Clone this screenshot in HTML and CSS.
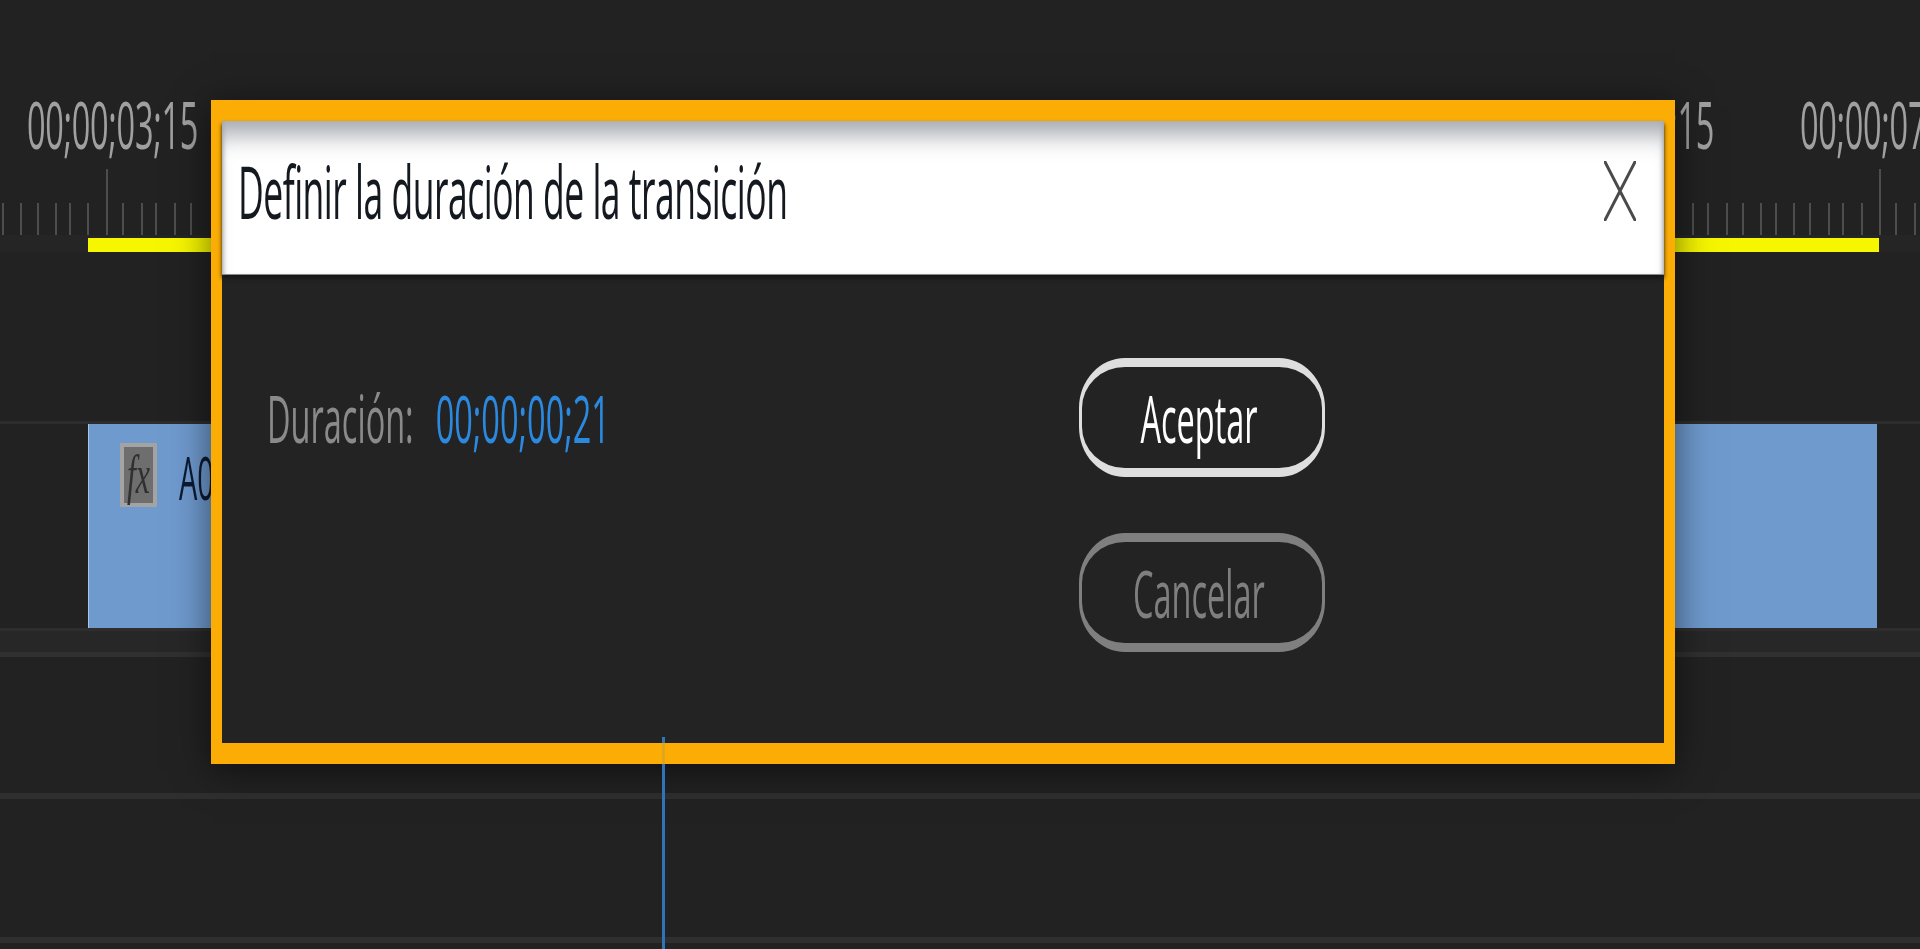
FILE: index.html
```html
<!DOCTYPE html>
<html lang="en">
<head>
    <meta charset="UTF-8">
    <meta name="viewport" content="width=device-width, initial-scale=1.0">
    <title>Definir la duración de la transición</title>
    <link rel="stylesheet" href="styles.css">
</head>
<body>
    <div id="timeline">
        <div class="labels">
            <span class="timecode first"><span class="tall">00;00;03;15</span></span>
            <span class="timecode second"><span class="tall">00;00;05;15</span></span>
            <span class="timecode third"><span class="tall">00;00;07;15</span></span>
        </div>
        <svg class="ticks" width="1920" height="66" viewBox="0 0 1920 66">
            <path d="M3 34V66M21 34V66M38 34V66M56 34V66M70 34V66M88 34V66M107 0V66M123 34V66M142 34V66M156 34V66M175 34V66M191 34V66M1693 34V66M1708 34V66M1727 34V66M1743 34V66M1761 34V66M1776 34V66M1794 34V66M1810 34V66M1829 34V66M1843 34V66M1862 34V66M1880 0V66M1896 34V66M1915 34V66"/>
        </svg>
        <div class="workarea"><div class="workbar"></div></div>
        <div class="track">
            <div class="clip">
                <span class="fx"><span class="fx-text">fx</span></span>
                <span class="clipname"><span class="tall">A01</span></span>
            </div>
        </div>
        <div class="band"></div>
        <div class="rule rule-b"></div>
        <div class="rule rule-c"></div>
    </div>

    <div id="dialog">
        <div class="head">
            <span class="title"><span class="tall">Definir la duración de la transición</span></span>
            <svg class="close" width="32" height="60" viewBox="0 0 32 60">
                <path d="M1 1L31 59M31 1L1 59"/>
            </svg>
        </div>
        <div class="body">
            <div class="duration">
                <span class="durlabel"><span class="tall">Duración:</span></span>
                <span class="durvalue"><span class="tall">00;00;00;21</span></span>
            </div>
            <div class="buttons">
                <div class="btn ok"><span class="tall">Aceptar</span></div>
                <div class="btn cancel"><span class="tall">Cancelar</span></div>
            </div>
        </div>
    </div>

    <div id="playhead"></div>
</body>
</html>
```

FILE: styles.css
```css
html{
    font-family: "Open Sans", sans-serif;
}

body{
    margin: 0;
    width: 1920px;
    height: 949px;
    overflow: hidden;
    position: relative;
    background-color: #222222;
    filter: blur(0.6px);
}

.tall{
    display: inline-block;
    white-space: nowrap;
    transform: scaleY(2.05);
}

.labels{
    display: flex;
    height: 169px;
    padding-top: 100px;
    box-sizing: border-box;
}

.timecode{
    flex: none;
    width: 170px;
    height: 47px;
    line-height: 47px;
    font-size: 32.5px;
    color: #a0a0a0;
    letter-spacing: -0.3px;
}

.timecode .tall{
    transform: scaleY(2.05);
}

.first{
    margin-left: 27px;
}

.second{
    margin-left: 1346px;
}

.third{
    margin-left: 87px;
}

.ticks{
    display: block;
}

.ticks path{
    stroke: #5c5c5c;
    stroke-width: 1.5;
    fill: none;
}

.workarea{
    height: 17px;
    padding-top: 3px;
    box-sizing: border-box;
    background-color: #252525;
}

.workbar{
    height: 14px;
    margin-left: 88px;
    width: 1791px;
    background-color: #f6f600;
}

.track{
    margin-top: 169px;
    border-top: 3px solid #2d2d2d;
}

.clip{
    display: flex;
    align-items: flex-start;
    margin-left: 88px;
    width: 1789px;
    height: 204px;
    box-sizing: border-box;
    padding: 19px 0 0 31px;
    background-color: #6f9ace;
    border-left: 1px solid #a9c4e6;
}

.fx{
    display: flex;
    align-items: center;
    justify-content: center;
    width: 37px;
    height: 64px;
    box-sizing: border-box;
    border: 4px solid #a3a3a3;
    background-color: #6e6e6e;
}

.fx-text{
    font-family: "Liberation Serif", serif;
    font-style: italic;
    font-size: 32px;
    color: #303030;
    transform: scaleY(1.7);
}

.clipname{
    margin: 12px 0 0 22px;
    height: 43px;
    line-height: 43px;
    font-size: 29px;
    color: #0c1a33;
}

.band{
    height: 29px;
    box-sizing: border-box;
    background-color: #272727;
    border-top: 3px solid #2e2e2e;
    border-bottom: 5px solid #303030;
}

.rule{
    height: 6px;
    background-color: #2f2f2f;
}

.rule-b{
    margin-top: 136px;
}

.rule-c{
    margin-top: 138px;
}

#dialog{
    position: absolute;
    left: 211px;
    top: 100px;
    width: 1464px;
    height: 664px;
    box-sizing: border-box;
    border-style: solid;
    border-color: #fbad05;
    border-width: 21px 11px;
    background-color: #232323;
    box-shadow: 0 6px 36px rgba(0, 0, 0, 0.55);
}

.head{
    display: flex;
    justify-content: space-between;
    align-items: center;
    height: 154px;
    padding: 0 28px 0 16px;
    box-sizing: border-box;
    background-color: #ffffff;
    box-shadow: inset 0 30px 24px -16px #a4a8ae, inset 5px 0 5px -4px #999999, inset -5px 0 5px -4px #999999, 0 3px 4px #151515;
    border-bottom: 1px solid #8a8a8a;
}

.title{
    font-size: 35.5px;
    line-height: 50px;
    color: #14181f;
    letter-spacing: -0.5px;
    margin-bottom: 16px;
}

.close{
    margin-bottom: 14px;
}

.close path{
    stroke: #4a4a4a;
    stroke-width: 3;
    stroke-linecap: round;
    fill: none;
}

.body{
    display: flex;
    justify-content: space-between;
    padding: 83px 339px 0 45px;
}

.duration{
    display: flex;
    gap: 22px;
    padding-top: 36px;
    height: 48px;
    line-height: 48px;
    font-size: 32.5px;
}

.durlabel{
    color: #8a8a8a;
}

.durvalue{
    color: #2b89df;
}

.buttons{
    display: flex;
    flex-direction: column;
    gap: 56px;
}

.btn{
    width: 246px;
    height: 119px;
    box-sizing: border-box;
    border-style: solid;
    border-width: 9px 3px;
    border-radius: 46px / 50px;
    display: flex;
    align-items: center;
    justify-content: center;
    font-size: 32.5px;
    padding-right: 6px;
}

.ok{
    border-color: #dedede;
    color: #ffffff;
}

.cancel{
    border-color: #7f7f7f;
    color: #7f7f7f;
}

#playhead{
    position: absolute;
    left: 662px;
    top: 737px;
    width: 3px;
    height: 212px;
    background: linear-gradient(#2f73b8 6px, rgba(47, 115, 184, 0.12) 6px, rgba(47, 115, 184, 0.12) 27px, #2f73b8 27px);
}
```
